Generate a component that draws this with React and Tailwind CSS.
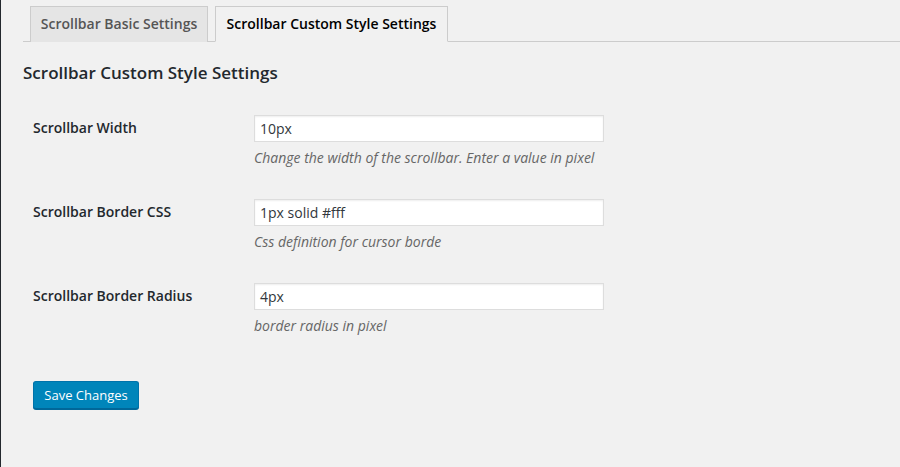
export default function App() {
  const rows = [
    { label: "Scrollbar Width", value: "10px", desc: "Change the width of the scrollbar. Enter a value in pixel" },
    { label: "Scrollbar Border CSS", value: "1px solid #fff", desc: "Css definition for cursor borde" },
    { label: "Scrollbar Border Radius", value: "4px", desc: "border radius in pixel" },
  ];
  return (
    <div
      className="h-[467px] w-[900px] overflow-hidden bg-[#f1f1f1] border-l border-[#23282d] text-[#23282d]"
      style={{ fontFamily: '"Open Sans", "Noto Sans", sans-serif' }}
    >
      <div className="pl-[22px]">
        <div className="flex gap-[7px] pl-[7px] pt-[6px] border-b border-[#ccc]">
          <div className="-mb-px w-[178px] text-center border border-b-0 border-[#ccc] bg-[#e5e5e5] pt-[5px] pb-[6px] text-[14px] leading-[24px] font-semibold text-[#555] whitespace-nowrap">
            Scrollbar Basic Settings
          </div>
          <div className="-mb-px w-[233px] text-center border border-[#ccc] border-b-[#f1f1f1] bg-[#f1f1f1] pt-[5px] pb-[5px] text-[14px] leading-[24px] font-semibold text-black whitespace-nowrap">
            Scrollbar Custom Style Settings
          </div>
        </div>
        <h2 className="mt-[19px] text-[17px] leading-[24px] font-semibold text-[#23282d]">
          Scrollbar Custom Style Settings
        </h2>
        <div className="mt-[30px] pl-[10px] flex flex-col gap-[31px]">
          {rows.map((r) => (
            <div key={r.label} className="flex">
              <div className="w-[221px] shrink-0 pt-[1px] text-[14px] leading-[24px] font-semibold text-[#23282d]">
                {r.label}
              </div>
              <div className="flex flex-col">
                <div className="w-[350px] h-[27px] border border-[#ddd] bg-white px-[5px] text-[14px] leading-[25px] text-[#32373c] shadow-[inset_0_1px_2px_rgba(0,0,0,0.07)]">
                  {r.value}
                </div>
                <div className="mt-[6px] text-[14px] leading-[20px] italic text-[#666]">{r.desc}</div>
              </div>
            </div>
          ))}
        </div>
        <div className="mt-[45px] pl-[10px]">
          <button className="h-[28px] w-[106px] rounded-[3px] border border-[#0073aa] border-b-[#006799] bg-[#0085ba] pb-px text-[13px] leading-[26px] text-white shadow-[0_1px_0_#006799]">
            Save Changes
          </button>
        </div>
      </div>
    </div>
  );
}
